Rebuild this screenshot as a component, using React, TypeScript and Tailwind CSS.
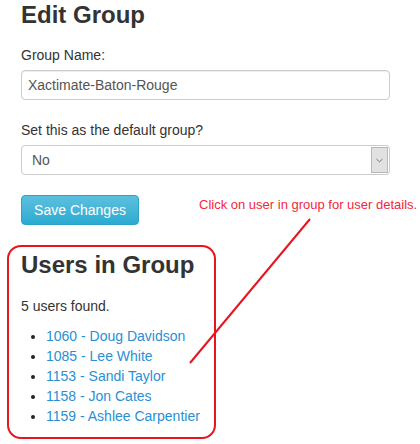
import React from "react";

const users = [
  "1060 - Doug Davidson",
  "1085 - Lee White",
  "1153 - Sandi Taylor",
  "1158 - Jon Cates",
  "1159 - Ashlee Carpentier",
];

export default function App() {
  return (
    <div className="relative w-[420px] h-[444px] overflow-hidden bg-white text-[#333] text-[14px] leading-[20px] font-['Liberation_Sans',Arial,sans-serif]">
      <div className="pl-[21px] pr-[30px] pt-[2px]">
        <h2 className="text-[24px] leading-[26.4px] font-bold">Edit Group</h2>
        <div className="mt-[17px]">
          <label className="block mb-[5px]">Group Name:</label>
          <div className="h-[30px] w-[369px] border border-[#ccc] rounded-[4px] flex items-center px-[6px] text-[#555] shadow-[inset_0_1px_1px_rgba(0,0,0,0.075)]">
            Xactimate-Baton-Rouge
          </div>
        </div>
        <div className="mt-[20px]">
          <label className="block mb-[5px]">Set this as the default group?</label>
          <div className="h-[30px] w-[369px] border border-[#ccc] rounded-[4px] flex items-stretch text-[#555] pl-[10px]">
            <span className="flex-1 flex items-center">No</span>
            <span className="w-[17px] my-[1px] mr-[1px] bg-[#e1e1e1] border border-[#b8b8b8] flex items-center justify-center">
              <svg width="7" height="5" viewBox="0 0 7 5">
                <path d="M0.5 1 L3.5 3.8 L6.5 1" fill="none" stroke="#777" strokeWidth="1" />
              </svg>
            </span>
          </div>
        </div>
        <button className="mt-[20px] h-[30px] w-[118px] rounded-[4px] border border-[#28a4c9] text-white bg-gradient-to-b from-[#5bc0de] to-[#2aabd2] text-[14px]">
          Save Changes
        </button>
      </div>

      <div className="ml-[7px] mt-[20px] w-[209px] h-[194px] border-2 border-[#e8141e] rounded-[14px] pl-[12px] pt-[5px]">
        <h2 className="text-[24px] leading-[26.4px] font-bold">Users in Group</h2>
        <p className="mt-[17px]">5 users found.</p>
        <ul className="mt-[10px] list-disc pl-[25px] marker:text-[#222]">
          {users.map((u) => (
            <li key={u}>
              <a className="text-[#2a8fd4]">{u}</a>
            </li>
          ))}
        </ul>
      </div>

      <div className="absolute left-[199px] top-[197px] text-[13px] leading-[16px] text-[#f2283c]">
        Click on user in group for user details.
      </div>
      <svg className="absolute left-0 top-0 pointer-events-none" width="420" height="444">
        <line x1="310" y1="219" x2="190" y2="363" stroke="#e8141e" strokeWidth="2" />
      </svg>
    </div>
  );
}
